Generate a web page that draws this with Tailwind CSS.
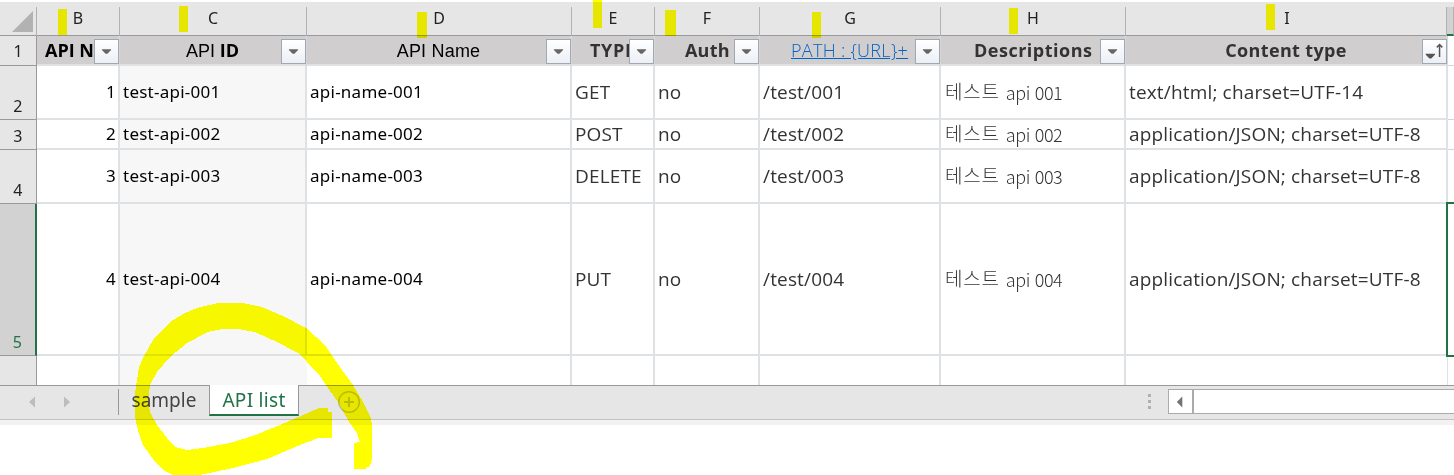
<!DOCTYPE html>
<html lang="ko">
<head>
<meta charset="utf-8">
<title>API list</title>
<script src="https://cdn.jsdelivr.net/npm/@tailwindcss/browser@4"></script>
</head>
<body class="bg-white">
<svg class="hidden">
  <symbol id="drop" viewBox="0 0 25 25"><path d="M7.5 10h10v1l-4 4h-2l-4-4z" fill="#666"/></symbol>
  <symbol id="sort" viewBox="0 0 25 25"><path d="M3 15h10v1l-4 4h-2L3 16z" fill="#555"/><path d="M18 18.500V6M15 8l3-3 3 3" fill="none" stroke="#555" stroke-width="1.600"/></symbol>
</svg>
<div class="relative h-[475px] w-[1454px] overflow-hidden bg-white pt-0.5 font-['Open_Sans','Noto_Sans_CJK_KR',sans-serif] text-[#333]">

  <!-- column letters -->
  <div class="grid h-[34px] grid-cols-[37px_83px_187px_265px_83px_105px_181px_185px_321px_7px] border-b border-[#999] bg-[#e6e6e6] pt-[5px] font-['Noto_Sans',sans-serif] text-[16px] leading-[23px] text-[#222] [&>div]:border-r [&>div]:border-[#b1b1b1] [&>div]:text-center">
    <div class="flex justify-end pt-1 pr-[3px]"><svg class="h-[21px] w-[21px]" viewBox="0 0 21 21"><path d="M21 0v21H0z" fill="#b2b2b2"/></svg></div>
    <div>B</div><div>C</div><div>D</div><div>E</div><div>F</div><div>G</div><div>H</div><div class="pl-0.5">I</div>
    <div class="h-[29px] border-b-2 border-b-[#217346]! bg-[#d2d2d2]"></div>
  </div>

  <!-- title row -->
  <div class="grid h-[30px] grid-cols-[37px_83px_187px_265px_83px_105px_181px_185px_322px_6px] grid-rows-[30px] text-[18px] leading-[28px] font-bold whitespace-nowrap [&>div]:border-b-2 [&>div]:border-[#dfe2e5] [&>.t]:relative [&>.t]:border-r-2 [&>.t]:border-r-[#d6d6d8] [&>.t]:bg-[#d0cece] [&>.t>svg]:absolute [&>.t>svg]:top-[3px] [&>.t>svg]:-right-px [&>.t>svg]:h-[25px] [&>.t>svg]:w-[25px] [&>.t>svg]:border [&>.t>svg]:border-[#a0a8b3] [&>.t>svg]:bg-linear-to-b [&>.t>svg]:from-white [&>.t>svg]:to-[#eceff5]">
    <div class="border-r border-b! border-[#999]! bg-[#e6e6e6] text-center font-['Noto_Sans',sans-serif] text-[16px] leading-[31px] font-normal text-[#222]">1</div>
    <div class="t pl-2 text-black"><span>API N</span><svg><use href="#drop"/></svg></div>
    <div class="t text-center text-black"><span class="font-['Liberation_Sans'] font-normal">API</span> <span>ID</span><svg><use href="#drop"/></svg></div>
    <div class="t text-center font-['Liberation_Sans'] leading-[30px] font-normal tracking-[0.2px] text-black"><span>API Name</span><svg><use href="#drop"/></svg></div>
    <div class="t pl-[18px] tracking-[0.7px]"><span>TYPE</span><svg><use href="#drop"/></svg></div>
    <div class="t pl-[30px] tracking-[0.2px]"><span>Auth</span><svg><use href="#drop"/></svg></div>
    <div class="t pl-[31px] font-light tracking-[0.3px] text-[#0563c1]"><span class="underline">PATH : {URL}+</span><svg><use href="#drop"/></svg></div>
    <div class="t pl-[33px] tracking-[0.5px]"><span>Descriptions</span><svg><use href="#drop"/></svg></div>
    <div class="t text-center tracking-[0.35px]"><span>Content type</span><svg><use href="#sort"/></svg></div>
    <div class="border-b! border-[#d4d4d4]!"></div>
  </div>

  <!-- data rows -->
  <div class="grid grid-cols-[37px_83px_187px_265px_83px_105px_181px_185px_322px_6px] grid-rows-[54px_30px_54px_152px_29px] text-[19px] tracking-[0.16px] whitespace-nowrap [&>div]:flex [&>div]:items-center [&>div]:border-r-2 [&>div]:border-b-2 [&>div]:border-[#dfe2e5] [&>div]:pl-[3px] [&>.n]:items-end [&>.n]:justify-center [&>.n]:border-r [&>.n]:border-b [&>.n]:border-[#999] [&>.n]:bg-[#e6e6e6] [&>.n]:p-0 [&>.n]:font-['Noto_Sans'] [&>.n]:text-[16px] [&>.n]:leading-[25px] [&>.n]:text-[#222] [&>.b]:justify-end [&>.b]:pr-0.5 [&>.b]:text-black [&>.c]:bg-[#f7f7f7] [&>.c]:text-black [&>.d]:text-black [&>.b]:font-['Noto_Sans'] [&>.c]:font-['Noto_Sans'] [&>.d]:font-['Noto_Sans'] [&>.b]:text-[17px] [&>.c]:text-[17px] [&>.d]:text-[17px] [&>.c]:tracking-[0.25px] [&>.d]:tracking-[0.25px] [&>.h]:pb-[3px] [&>.h]:pl-1 [&>.h]:font-['Noto_Sans_CJK_KR'] [&>.h]:text-[19px] [&>.h]:leading-[26px] [&>.h]:font-light [&>.h]:tracking-[0.8px] [&>.h>span]:ml-1.5 [&>.h>span]:pt-0.5 [&>.h>span]:text-[18px] [&>.h>span]:tracking-[-0.4px] [&>.j]:border-r-0 [&>.j]:border-b [&>.j]:border-[#d4d4d4]">
    <div class="n">2</div><div class="b">1</div><div class="c">test-api-001</div><div class="d">api-name-001</div><div>GET</div><div>no</div><div>/test/001</div><div class="h">테스트 <span>api 001</span></div><div>text/html; charset=UTF-14</div><div class="j"></div>
    <div class="n">3</div><div class="b">2</div><div class="c">test-api-002</div><div class="d">api-name-002</div><div>POST</div><div>no</div><div>/test/002</div><div class="h">테스트 <span>api 002</span></div><div>application/JSON; charset=UTF-8</div><div class="j"></div>
    <div class="n">4</div><div class="b">3</div><div class="c">test-api-003</div><div class="d">api-name-003</div><div>DELETE</div><div>no</div><div>/test/003</div><div class="h">테스트 <span>api 003</span></div><div>application/JSON; charset=UTF-8</div><div class="j border-b-0!"></div>
    <div class="n border-r-2! border-r-[#217346]! bg-[#d2d2d2]! text-[#217346]!">5</div><div class="b">4</div><div class="c">test-api-004</div><div class="d">api-name-004</div><div>PUT</div><div>no</div><div>/test/004</div><div class="h">테스트 <span>api 004</span></div><div>application/JSON; charset=UTF-8</div><div class="j relative z-10 -mt-0.5 -mb-px -ml-0.5 border-y-2! border-l-2! border-[#217346]!"></div>
    <div class="n border-b-0!"></div><div class="border-b-0!"></div><div class="c border-0!"></div><div class="border-b-0!"></div><div class="border-b-0!"></div><div class="border-b-0!"></div><div class="border-b-0!"></div><div class="border-b-0!"></div><div class="border-r! border-b-0!"></div><div class="j border-b-0!"></div>
  </div>

  <!-- sheet tabs and scroll bar -->
  <div class="flex h-[35px] border-y border-t-[#999] border-b-[#c3c3c3] bg-[#e6e6e6] font-['Noto_Sans',sans-serif] text-[19px]">
    <svg class="h-[33px] w-[118px]" viewBox="0 0 118 33"><path d="M35 10.500v11l-6-5.500zM64 10.500v11l6-5.500z" fill="#bdbdbd"/></svg>
    <div class="mt-[3px] h-[26px] w-px bg-[#999]"></div>
    <div class="w-[90px] text-center leading-[29px] text-[#444]"><span>sample</span></div>
    <div class="-mt-px h-[31px] w-[90px] border-x border-b-2 border-x-[#999] border-b-[#217346] bg-white text-center leading-[30px] tracking-[0.3px] text-[#217346]"><span>API list</span></div>
    <svg class="ml-[38px] h-[33px] w-6" viewBox="0 0 24 33"><circle cx="12" cy="16" r="10.300" fill="none" stroke="#bcbcbc" stroke-width="1.400"/><path d="M7 16h10M12 11v10" stroke="#bcbcbc" stroke-width="2"/></svg>
    <div class="mt-2 ml-[787px] flex flex-col gap-[3px] [&>i]:h-[3px] [&>i]:w-[3px] [&>i]:bg-[#b1b1b1]"><i></i><i></i><i></i></div>
    <div class="mt-[3px] ml-[17px] flex h-[25px] w-[286px] border border-r-0 border-[#ababab] bg-white">
      <svg class="h-[23px] w-[25px] border-r-2 border-[#ababab]" viewBox="0 0 25 23"><path d="M14.500 6v12L8.500 12z" fill="#737373"/></svg>
    </div>
  </div>
  <div class="h-[5px] bg-[#f3f2f1]"></div>

  <!-- highlighter strokes drawn over the sheet -->
  <svg class="absolute top-0 left-0 z-20 h-[475px] w-[1454px] mix-blend-multiply" viewBox="0 0 1454 475" fill="#ff0">
    <path shape-rendering="crispEdges" d="M58 9h9v26h-9zM179 6h9v26h-9zM417 12h10v26h-10zM593 0h9v28h-9zM665 10h11v26h-11zM812 12h9v26h-9zM1009 8h9v26h-9zM1266 4h9v26h-9z"/>
    <path shape-rendering="crispEdges" d="M218 303H242L262 307L283 316L306 328L325 345L337 363L353 385L363 402L371 418L372 425V460L370 466L365 469H354V443L360 442L357 433L349 422L338 402L328 388L320 376L307 362L298 353L277 342L255 332L238 329H222L208 332L187 343L170 357L157 372L150 385L148 400L150 412L157 425L167 438L175 447L187 450L203 448L230 443L253 436L280 425L310 412L319 408H328V412H332V438H318L300 445L267 459L233 468L200 475H173L163 470L153 459L143 445L138 430L135 417V393L139 367L143 358L153 340L163 329L173 320L185 313L197 308Z"/>
  </svg>
</div>
</body>
</html>
